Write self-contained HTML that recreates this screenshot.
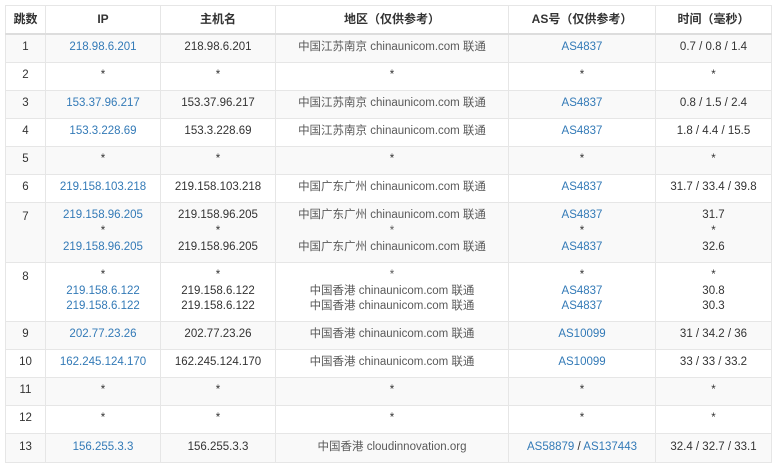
<!DOCTYPE html>
<html><head><meta charset="utf-8"><style>
body{margin:0;background:#fff;font-family:"Liberation Sans","Noto Sans CJK SC",sans-serif;font-size:11.5px;color:#333}
table{position:absolute;left:5px;top:5px;border-collapse:collapse;table-layout:fixed;width:766px}
td,th{border:1px solid #e6e6e6;text-align:center;padding:0;line-height:15.7px}
th{height:27px;font-weight:bold;border-bottom:2px solid #ddd;font-size:12px}
tr{height:28px}
tbody tr:nth-child(odd){background:#f9f9f9}
a{color:#337ab7;text-decoration:none}
.r{color:#595959}
</style></head><body>
<table>
<colgroup><col style="width:40px"><col style="width:115px"><col style="width:115px"><col style="width:233px"><col style="width:147px"><col style="width:116px"></colgroup>
<thead><tr><th>跳数</th><th>IP</th><th>主机名</th><th>地区（仅供参考）</th><th>AS号（仅供参考）</th><th>时间（毫秒）</th></tr></thead>
<tbody>
<tr><td>1</td><td><a>218.98.6.201</a></td><td>218.98.6.201</td><td class="r">中国江苏南京 chinaunicom.com 联通</td><td><a>AS4837</a></td><td>0.7 / 0.8 / 1.4</td></tr>
<tr><td>2</td><td>*</td><td>*</td><td>*</td><td>*</td><td>*</td></tr>
<tr><td>3</td><td><a>153.37.96.217</a></td><td>153.37.96.217</td><td class="r">中国江苏南京 chinaunicom.com 联通</td><td><a>AS4837</a></td><td>0.8 / 1.5 / 2.4</td></tr>
<tr><td>4</td><td><a>153.3.228.69</a></td><td>153.3.228.69</td><td class="r">中国江苏南京 chinaunicom.com 联通</td><td><a>AS4837</a></td><td>1.8 / 4.4 / 15.5</td></tr>
<tr><td>5</td><td>*</td><td>*</td><td>*</td><td>*</td><td>*</td></tr>
<tr><td>6</td><td><a>219.158.103.218</a></td><td>219.158.103.218</td><td class="r">中国广东广州 chinaunicom.com 联通</td><td><a>AS4837</a></td><td>31.7 / 33.4 / 39.8</td></tr>
<tr style="height:60px"><td style="vertical-align:top;padding-top:7px">7</td><td><a>219.158.96.205</a><br>*<br><a>219.158.96.205</a></td><td>219.158.96.205<br>*<br>219.158.96.205</td><td class="r">中国广东广州 chinaunicom.com 联通<br>*<br>中国广东广州 chinaunicom.com 联通</td><td><a>AS4837</a><br>*<br><a>AS4837</a></td><td>31.7<br>*<br>32.6</td></tr>
<tr style="height:59px"><td style="vertical-align:top;padding-top:7px">8</td><td>*<br><a>219.158.6.122</a><br><a>219.158.6.122</a></td><td>*<br>219.158.6.122<br>219.158.6.122</td><td class="r">*<br>中国香港 chinaunicom.com 联通<br>中国香港 chinaunicom.com 联通</td><td>*<br><a>AS4837</a><br><a>AS4837</a></td><td>*<br>30.8<br>30.3</td></tr>
<tr><td>9</td><td><a>202.77.23.26</a></td><td>202.77.23.26</td><td class="r">中国香港 chinaunicom.com 联通</td><td><a>AS10099</a></td><td>31 / 34.2 / 36</td></tr>
<tr><td>10</td><td><a>162.245.124.170</a></td><td>162.245.124.170</td><td class="r">中国香港 chinaunicom.com 联通</td><td><a>AS10099</a></td><td>33 / 33 / 33.2</td></tr>
<tr><td>11</td><td>*</td><td>*</td><td>*</td><td>*</td><td>*</td></tr>
<tr><td>12</td><td>*</td><td>*</td><td>*</td><td>*</td><td>*</td></tr>
<tr style="height:29px"><td>13</td><td><a>156.255.3.3</a></td><td>156.255.3.3</td><td class="r">中国香港 cloudinnovation.org</td><td><a>AS58879</a> / <a>AS137443</a></td><td>32.4 / 32.7 / 33.1</td></tr>
</tbody></table>
</body></html>
